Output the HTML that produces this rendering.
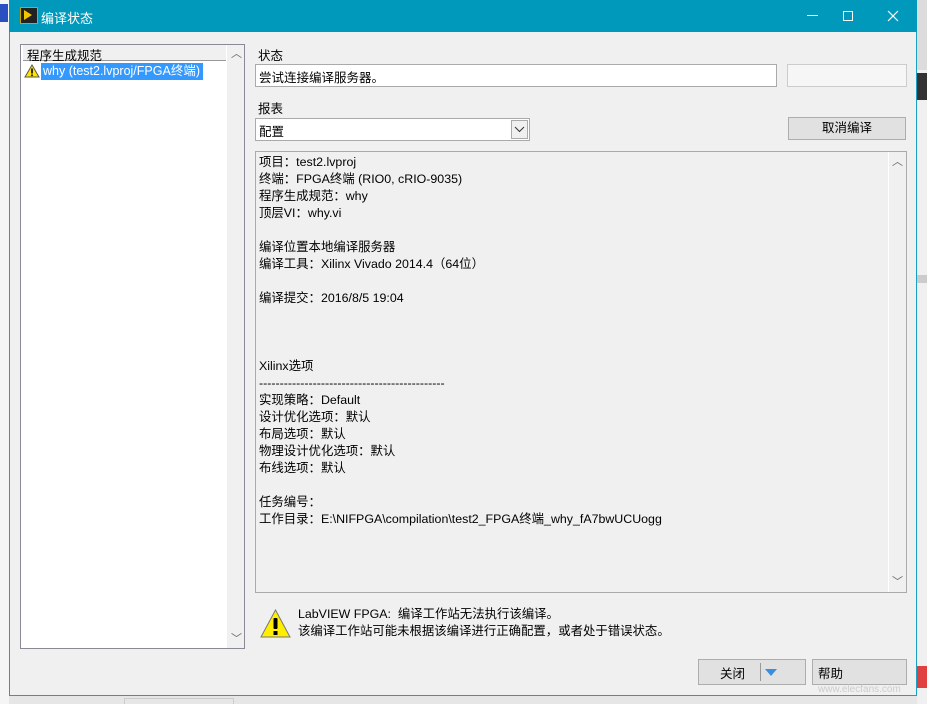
<!DOCTYPE html>
<html><head><meta charset="utf-8"><style>
*{margin:0;padding:0;box-sizing:border-box}
body{width:927px;height:704px;overflow:hidden;background:#e6e6e6;position:relative;font-family:"Liberation Sans","Noto Sans CJK SC",sans-serif;font-size:12px;color:#000}
.a{position:absolute}
.win{left:9px;top:0;width:908px;height:696px;background:#f0f0f0;border:1px solid #1aa0c0;border-top:none}
.title{left:9px;top:0;width:908px;height:32px;background:#0099bb;color:#fff;font-size:13px}
.t{white-space:nowrap}
</style></head><body>
<div class="a" style="left:0;top:0;width:9px;height:704px;background:#f5f5f5"></div>
<div class="a" style="left:0;top:4px;width:8px;height:18px;background:#2a4fc0"></div>
<div class="a" style="left:917px;top:0;width:10px;height:704px;background:#f0f0f0"></div>
<div class="a" style="left:917px;top:0;width:10px;height:70px;background:#dcdcdc"></div>
<div class="a" style="left:917px;top:73px;width:10px;height:27px;background:#333"></div>
<div class="a" style="left:917px;top:275px;width:10px;height:8px;background:#ccc"></div>
<div class="a" style="left:917px;top:666px;width:10px;height:22px;background:#e04040"></div>
<div class="a win"></div>
<div class="a title">
 <div class="a" style="left:11px;top:7px;width:18px;height:17px;background:#222;border:1px solid #c9a000"><div class="a" style="left:3px;top:2px;width:0;height:0;border-left:8px solid #f5c400;border-top:5px solid transparent;border-bottom:5px solid transparent"></div></div>
 <div class="a t" style="left:32px;top:8px">编译状态</div>
 <div class="a" style="left:798px;top:15px;width:11px;height:1px;background:#fff"></div>
 <div class="a" style="left:834px;top:11px;width:10px;height:10px;border:1px solid #fff"></div>
 <svg class="a" style="left:878px;top:10px" width="12" height="12"><path d="M1 1L11 11M11 1L1 11" stroke="#fff" stroke-width="1.2"/></svg>
</div>
<!-- left list -->
<div class="a" style="left:20px;top:44px;width:225px;height:605px;background:#fff;border:1px solid #8a8a96"></div>
<div class="a" style="left:23px;top:45px;width:203px;height:16px;background:#f0f0f0;border-bottom:1px solid #999"></div>
<div class="a t" style="left:27px;top:45px;font-size:12.5px">程序生成规范</div>
<div class="a" style="left:227px;top:45px;width:17px;height:603px;background:#f0f0f0"></div>
<div class="a t" style="left:231px;top:45px;color:#666;font-size:11px">︿</div>
<div class="a t" style="left:231px;top:630px;color:#666;font-size:11px">﹀</div>
<svg class="a" style="left:24px;top:64px" width="16" height="14"><path d="M8 1L15 13H1Z" fill="#ffe400" stroke="#555"/><rect x="7.2" y="4.5" width="1.6" height="5" fill="#000"/><rect x="7.2" y="10.5" width="1.6" height="1.6" fill="#000"/></svg>
<div class="a t" style="left:41px;top:63px;height:17px;width:162px;background:#3399ff;color:#fff;padding:0 2px;line-height:17px;font-size:12.5px">why (test2.lvproj/FPGA终端)</div>
<!-- right -->
<div class="a t" style="left:258px;top:45px;font-size:12.5px">状态</div>
<div class="a" style="left:255px;top:64px;width:522px;height:23px;background:#fff;border:1px solid #aaa"></div>
<div class="a t" style="left:259px;top:67px;font-size:12.5px">尝试连接编译服务器。</div>
<div class="a" style="left:787px;top:64px;width:120px;height:23px;background:#f6f6f6;border:1px solid #ccc"></div>
<div class="a t" style="left:258px;top:98px;font-size:12.5px">报表</div>
<div class="a" style="left:255px;top:118px;width:275px;height:23px;background:#fff;border:1px solid #aaa"></div>
<div class="a t" style="left:259px;top:121px;font-size:12.5px">配置</div>
<div class="a" style="left:511px;top:120px;width:17px;height:19px;background:#f0f0f0;border:1px solid #aaa"></div>
<svg class="a" style="left:514px;top:126px" width="11" height="7"><path d="M1 1L5.5 5.5L10 1" stroke="#333" fill="none"/></svg>
<div class="a" style="left:788px;top:117px;width:118px;height:23px;background:#e1e1e1;border:1px solid #adadad;text-align:center;line-height:21px;font-size:12.5px">取消编译</div>
<div class="a" style="left:255px;top:151px;width:652px;height:442px;background:#f0f0f0;border:1px solid #aaa"></div>
<div class="a" style="left:888px;top:152px;width:1px;height:440px;background:#fff"></div>
<div class="a t" style="left:892px;top:153px;color:#666;font-size:11px">︿</div>
<div class="a t" style="left:892px;top:573px;color:#666;font-size:11px">﹀</div>
<div class="a" style="left:259px;top:154px;line-height:17px;white-space:pre;font-size:12.4px">项目：test2.lvproj
终端：FPGA终端 (RIO0, cRIO-9035)
程序生成规范：why
顶层VI：why.vi

编译位置本地编译服务器
编译工具：Xilinx Vivado 2014.4（64位）

编译提交：2016/8/5 19:04



Xilinx选项
---------------------------------------------
实现策略：Default
设计优化选项：默认
布局选项：默认
物理设计优化选项：默认
布线选项：默认

任务编号：
工作目录：E:\NIFPGA\compilation\test2_FPGA终端_why_fA7bwUCUogg</div>
<svg class="a" style="left:260px;top:609px" width="31" height="30"><path d="M15.5 1L30 28H1Z" fill="#ffee00" stroke="#777"/><rect x="13.5" y="9" width="4" height="11" rx="1" fill="#000"/><rect x="13.5" y="22" width="4" height="4" fill="#000"/></svg>
<div class="a" style="left:298px;top:606px;line-height:17px;white-space:pre;font-size:12.4px">LabVIEW FPGA:  编译工作站无法执行该编译。
该编译工作站可能未根据该编译进行正确配置，或者处于错误状态。</div>
<div class="a" style="left:698px;top:659px;width:108px;height:26px;background:#e1e1e1;border:1px solid #adadad"></div>
<div class="a t" style="left:720px;top:663px;font-size:12.5px">关闭</div>
<div class="a" style="left:760px;top:663px;width:1px;height:18px;background:#999"></div>
<div class="a" style="left:765px;top:669px;width:0;height:0;border-left:6px solid transparent;border-right:6px solid transparent;border-top:7px solid #3a8ee0"></div>
<div class="a" style="left:812px;top:659px;width:95px;height:26px;background:#e1e1e1;border:1px solid #adadad"></div>
<div class="a t" style="left:818px;top:663px;font-size:12.5px">帮助</div>
<div class="a t" style="left:818px;top:684px;font-size:10px;color:#ccc">www.elecfans.com</div>
<div class="a" style="left:124px;top:698px;width:110px;height:6px;border:1px solid #ccc;border-bottom:none"></div>
</body></html>
